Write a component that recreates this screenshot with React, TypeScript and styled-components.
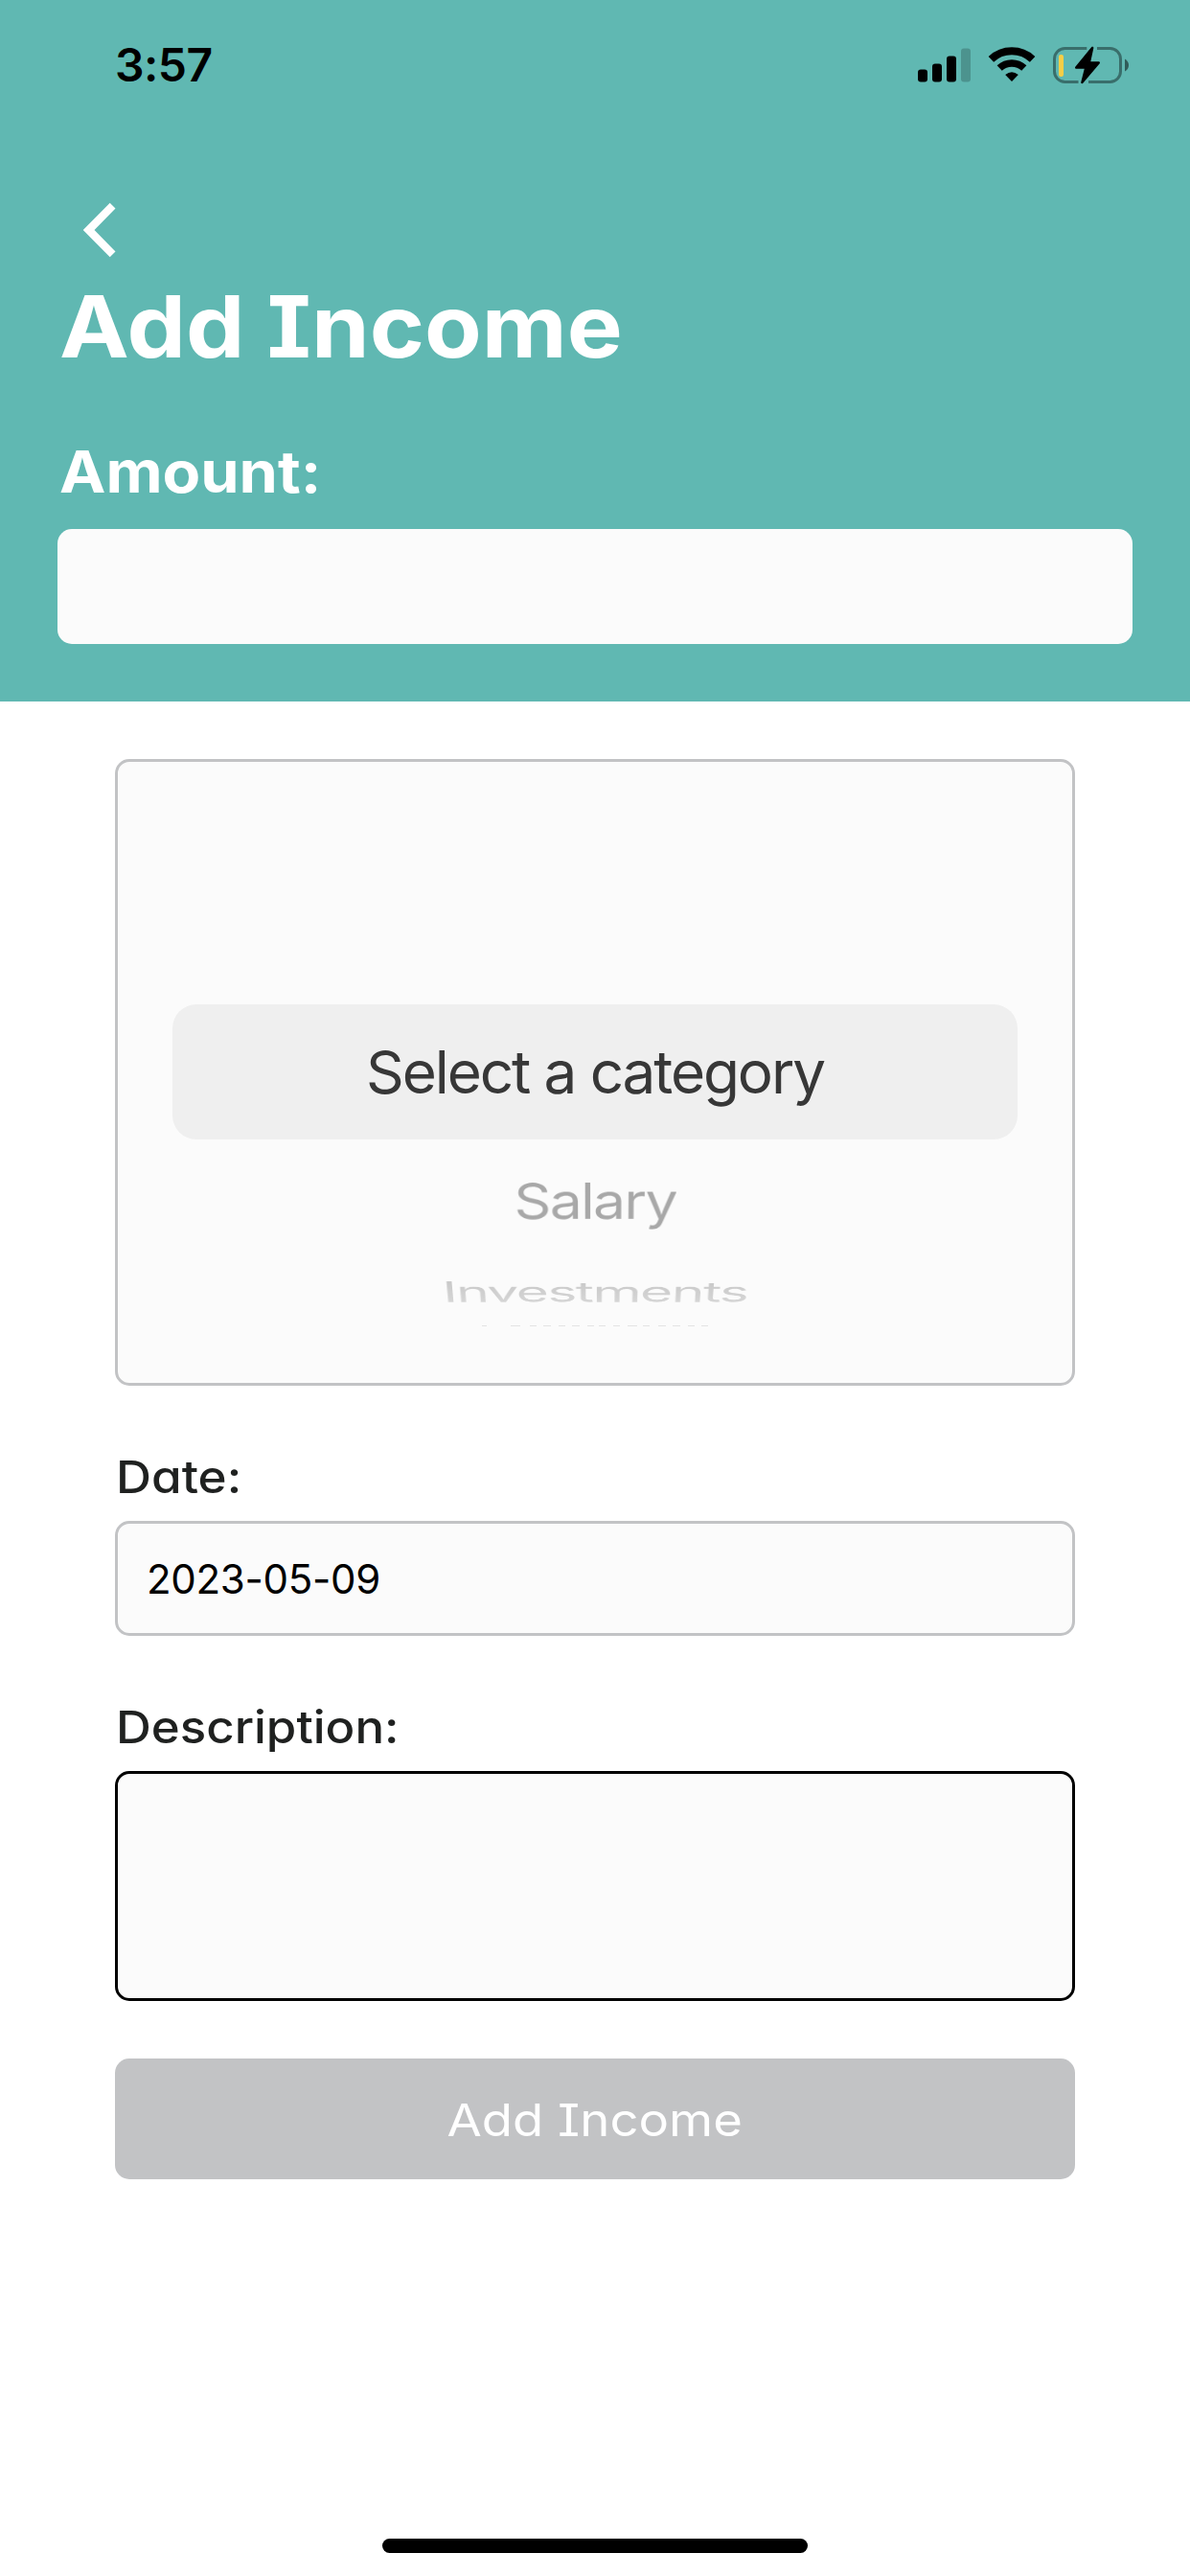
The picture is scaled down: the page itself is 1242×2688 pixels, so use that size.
import React from "react";
import styled, { createGlobalStyle } from "styled-components";

const teal = "#60b8b2";
const fieldFill = "#fbfbfb";
const outline = "#c2c3c5";

const GlobalStyle = createGlobalStyle`
  * { box-sizing: border-box; }
  body { margin: 0; background: #fff; }
  button, input, textarea { font-family: inherit; }
`;

const Screen = styled.div`
  display: flex;
  flex-direction: column;
  width: 1242px;
  height: 2688px;
  background: #fff;
  font-family: Inter, "Liberation Sans", sans-serif;
`;

const Header = styled.header`
  display: flex;
  flex-direction: column;
  height: 732px;
  padding: 0 60px;
  background: ${teal};
`;

const StatusBar = styled.div`
  display: flex;
  align-items: center;
  justify-content: space-between;
  height: 135px;
  padding: 0 3px 0 60px;
`;

const Clock = styled.span`
  font-size: 48px;
  font-weight: 600;
  letter-spacing: -0.5px;
  line-height: 60px;
  color: #000;
`;

const StatusIcons = styled.div`
  display: flex;
  align-items: center;
  gap: 19px;
  svg { display: block; overflow: visible; }
`;

const BackButton = styled.button`
  display: flex;
  align-self: flex-start;
  margin: 76px 0 17px;
  padding: 0 0 0 26px;
  border: 0;
  background: none;
`;

/* Wide display lettering: single-storey a, slab capital I. */
const Wide = styled.span<{ $stretch: number; $from?: string }>`
  display: inline-block;
  font-feature-settings: "cv08" 1, "cv11" 1;
  transform: scaleX(${(p) => p.$stretch});
  transform-origin: ${(p) => p.$from ?? "left"} center;
`;

const Title = styled.h1`
  margin: 0;
  font-size: 90px;
  font-weight: 700;
  line-height: 110px;
  padding-left: 2px;
  color: #fff;
`;

const AmountLabel = styled.label`
  margin: 60px 0 24px;
  padding-left: 2px;
  font-size: 60px;
  font-weight: 700;
  line-height: 72px;
  color: #fff;
`;

const AmountInput = styled.input`
  width: 100%;
  height: 120px;
  padding: 0 30px;
  border: 0;
  border-radius: 15px;
  background: ${fieldFill};
  font-size: 42px;
  outline: none;
`;

const Form = styled.main`
  display: flex;
  flex: 1;
  flex-direction: column;
  gap: 60px;
  padding: 60px 120px 0;
`;

const Picker = styled.div`
  display: flex;
  flex-direction: column;
  align-items: center;
  height: 654px;
  padding: 253px 57px 0;
  border: 3px solid ${outline};
  border-radius: 15px;
  background: ${fieldFill};
`;

const SelectedRow = styled.div`
  display: flex;
  align-items: center;
  justify-content: center;
  flex: none;
  width: 100%;
  height: 141px;
  padding-top: 1px;
  border-radius: 25px;
  background: #efefef;
  font-size: 62px;
  letter-spacing: -2.1px;
  line-height: 76px;
  color: #373737;
`;

const WheelRow = styled.div<{ $height: number; $tilt: number; $squeeze: number; $ink: string }>`
  display: flex;
  align-items: center;
  justify-content: center;
  flex: none;
  height: ${(p) => p.$height}px;
  font-size: 61px;
  letter-spacing: -1.7px;
  line-height: 76px;
  white-space: nowrap;
  transform: perspective(3000px) rotateX(-${(p) => p.$tilt}deg) scaleX(${(p) => p.$squeeze});
  span {
    background: ${(p) => p.$ink};
    background-clip: text;
    color: transparent;
  }
`;

const Field = styled.div`
  display: flex;
  flex-direction: column;
  gap: 12px;
`;

const FieldLabel = styled.label`
  padding-left: 1px;
  font-size: 47px;
  font-weight: 450;
  line-height: 69px;
  color: #1f2120;
`;

const DateInput = styled.input`
  height: 120px;
  padding: 0 30px;
  border: 3px solid ${outline};
  border-radius: 15px;
  background: ${fieldFill};
  font-size: 42px;
  letter-spacing: -0.3px;
  color: #000;
  outline: none;
`;

const DescriptionInput = styled.textarea`
  height: 240px;
  padding: 30px;
  border: 3px solid #000;
  border-radius: 15px;
  background: ${fieldFill};
  font-size: 42px;
  resize: none;
  outline: none;
`;

const SubmitButton = styled.button`
  height: 126px;
  padding: 1px 0 0;
  border: 0;
  border-radius: 15px;
  background: ${outline};
  font-size: 47px;
  color: #fff;
`;

const HomeIndicator = styled.div`
  align-self: center;
  width: 444px;
  height: 15px;
  margin-bottom: 24px;
  border-radius: 8px;
  background: #000;
`;

const Signal = () => (
  <svg width="55" height="36" viewBox="0 0 55 36">
    <rect x="0" y="22.5" width="10" height="13" rx="3" />
    <rect x="15" y="16.5" width="10" height="19" rx="3" />
    <rect x="30" y="8.5" width="10" height="27" rx="3" />
    <rect x="45" y="0.5" width="10" height="35" rx="3" opacity="0.2" />
  </svg>
);

const Wifi = () => (
  <svg width="48" height="37" viewBox="0 0 48 37" fill="none" stroke="#000">
    <path d="M2.4 12.8A31.6 31.6 0 0 1 45.6 12.8" strokeWidth="8" />
    <path d="M11.2 22A18.8 18.8 0 0 1 36.8 22" strokeWidth="7.6" />
    <path d="M24 36L17.2 29Q24 23.4 30.8 29Z" fill="#000" stroke="none" />
  </svg>
);

const Battery = () => (
  <svg width="80" height="38" viewBox="0 0 80 38">
    <g fill="none" stroke="#000" strokeOpacity="0.4" strokeWidth="3">
      <path d="M35.3 1.5H12.5A11 11 0 0 0 1.5 12.5V25.5A11 11 0 0 0 12.5 36.5H26.5" />
      <path d="M46 1.5H59.5A11 11 0 0 1 70.5 12.5V25.5A11 11 0 0 1 59.5 36.5H37" />
    </g>
    <path d="M75 12.5Q79 15 79 19T75 25.5Z" fillOpacity="0.5" />
    <rect x="6" y="8" width="5" height="23" rx="2.2" fill="#f7ce46" />
    <path
      d="M41.2 0.8L24.2 21.6H34.3L30.4 37L47.8 16.4H37.8Z"
      stroke="#000"
      strokeWidth="2.4"
      strokeLinejoin="round"
    />
  </svg>
);

const ChevronBack = () => (
  <svg width="36" height="58" viewBox="0 0 36 58">
    <path d="M0.7 29L28.7 0.7L34.5 6.5L12.5 29L34.5 51.5L28.7 57.3Z" fill="#fff" />
  </svg>
);

/* Upper edge of the row that is turning out of sight behind the wheel. */
const edgeMarks = [
  [0, 5], [30, 10], [50, 7], [64, 8], [80, 7], [94, 8], [110, 7], [122, 7],
  [137, 7], [152, 10], [168, 7], [184, 8], [199, 8], [215, 7], [229, 7],
];

const WheelEdge = () => (
  <svg width="236" height="3" viewBox="0 0 236 3">
    {edgeMarks.map(([x, w]) => (
      <rect key={x} x={x} y="0" width={w} height="1" fill="#e3e3e3" />
    ))}
  </svg>
);

const WheelEdgeRow = styled.div`
  display: flex;
  flex: none;
  padding-top: 4px;
`;

export default function App() {
  return (
    <Screen>
      <GlobalStyle />
      <Header>
        <StatusBar>
          <Clock>3:57</Clock>
          <StatusIcons>
            <Signal />
            <Wifi />
            <Battery />
          </StatusIcons>
        </StatusBar>
        <BackButton aria-label="Back">
          <ChevronBack />
        </BackButton>
        <Title>
          <Wide $stretch={1.083}>Add Income</Wide>
        </Title>
        <AmountLabel htmlFor="amount">
          <Wide $stretch={1.08}>Amount:</Wide>
        </AmountLabel>
        <AmountInput id="amount" />
      </Header>
      <Form>
        <Picker>
          <SelectedRow>Select a category</SelectedRow>
          <WheelRow $height={128} $tilt={31} $squeeze={0.995} $ink="#a8a8a8">
            <span>Salary</span>
          </WheelRow>
          <WheelRow $height={62} $tilt={61} $squeeze={0.965} $ink="linear-gradient(#c4c4c4, #dadada)">
            <span>Investments</span>
          </WheelRow>
          <WheelEdgeRow>
            <WheelEdge />
          </WheelEdgeRow>
        </Picker>
        <Field>
          <FieldLabel htmlFor="date">
            <Wide $stretch={1.09}>Date:</Wide>
          </FieldLabel>
          <DateInput id="date" defaultValue="2023-05-09" />
        </Field>
        <Field>
          <FieldLabel htmlFor="description">
            <Wide $stretch={1.085}>Description:</Wide>
          </FieldLabel>
          <DescriptionInput id="description" />
        </Field>
        <SubmitButton>
          <Wide $stretch={1.12} $from="center">Add Income</Wide>
        </SubmitButton>
      </Form>
      <HomeIndicator />
    </Screen>
  );
}
